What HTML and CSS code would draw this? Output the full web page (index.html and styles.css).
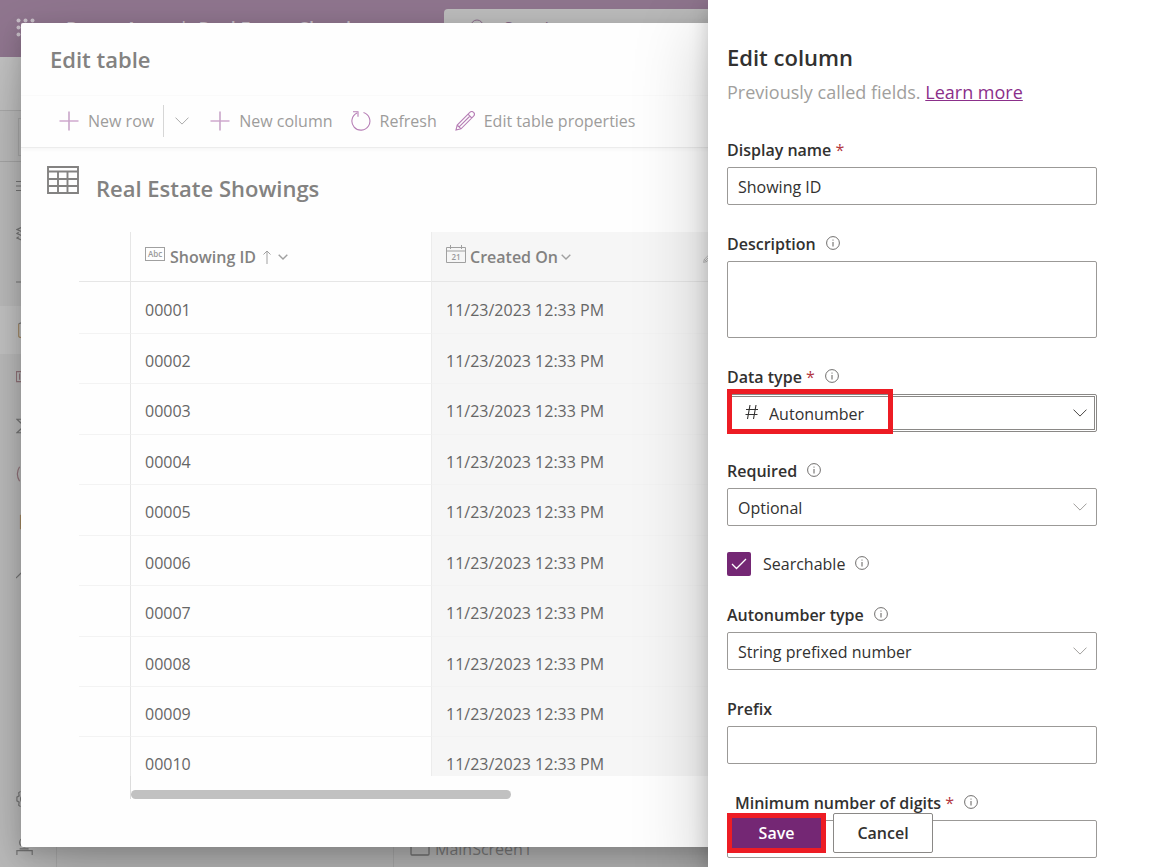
FILE: index.html
```html
<!DOCTYPE html>
<html lang="en">
<head>
<meta charset="utf-8">
<title>Edit table</title>
<link rel="stylesheet" href="styles.css">
</head>
<body>
<svg class="defs" aria-hidden="true">
  <symbol id="info" viewBox="0 0 14 14"><circle cx="7" cy="7" r="6.4" fill="none" stroke="currentColor" stroke-width=".9"/><path d="M7 6v4.5M7 3.6v1" stroke="currentColor" fill="none"/></symbol>
  <symbol id="chevron" viewBox="0 0 14 8"><path d="M.5 .6L7 7.1 13.5 .6" stroke="currentColor" fill="none"/></symbol>
  <symbol id="plus" viewBox="0 0 20 20"><path d="M.5 10h19" stroke="#b77fb6" stroke-width="1.2"/><path d="M10 .5v19" stroke="#c9a5c9" stroke-width="1.6"/></symbol>
  <symbol id="pencil" viewBox="0 0 20 20"><path d="M1 19l1.200-5L14.800 1.400a2.600 2.600 0 0 1 3.800 3.800L6 17.800zM2.200 14l3.800 3.800M13 3.200L16.800 7M4.100 15.900L15 5" fill="none" stroke="currentColor" stroke-width="1.100"/></symbol>
</svg>

<div class="app">
  <header class="app-header">
    <svg class="waffle" viewBox="0 0 20 20"><g fill="currentColor"><circle cx="2.500" cy="2.500" r="2"/><circle cx="9.500" cy="2.500" r="2"/><circle cx="16.500" cy="2.500" r="2"/><circle cx="2.500" cy="9.500" r="2"/><circle cx="9.500" cy="9.500" r="2"/><circle cx="16.500" cy="9.500" r="2"/><circle cx="2.500" cy="16.500" r="2"/><circle cx="9.500" cy="16.500" r="2"/><circle cx="16.500" cy="16.500" r="2"/></g></svg>
    <div class="app-name"><span>Power Apps</span><span>|</span><span>Real Estate Showings</span></div>
    <div class="app-search">
      <svg viewBox="0 0 18 18"><circle cx="7" cy="7" r="6" fill="none" stroke="#8a6b8b"/><path d="M11 11l6 6" stroke="#8a6b8b"/></svg>
      <span>Search</span>
    </div>
  </header>
  <div class="app-commands"></div>
  <div class="app-formula"><div class="formula-box"></div></div>
  <div class="app-body">
    <nav class="rail">
      <span><svg viewBox="0 0 20 20"><path d="M0 5h18M0 10h18M0 15h18"/></svg></span>
      <span><svg viewBox="0 0 20 20"><path d="M10 1L1 5l9 4 9-4zM3 8L1 9.500l9 4 9-4L17 8M3 13l-2 1.500 9 4 9-4L17 13"/></svg></span>
      <span><svg viewBox="0 0 20 20"><path d="M0 10h20M10 0v20"/></svg></span>
      <span class="active"><svg viewBox="0 0 20 20"><path class="amber" d="M3 3v14q0 1.500 4 1.500h6q4 0 4-1.500V3"/><path d="M3 3q7-3 14 0"/></svg></span>
      <span><svg viewBox="0 0 20 20"><path class="rose" d="M.5 3h18v11H.5zM4 5v7M7 5v7"/></svg></span>
      <span><svg viewBox="0 0 20 20"><path d="M17 5V2.500H1L9 10l-8 7.500h16V15"/></svg></span>
      <span><svg viewBox="0 0 20 20"><path class="rose" d="M4 2q-5 8 0 16M16 2q5 8 0 16"/></svg></span>
      <span><svg viewBox="0 0 20 20"><path class="amber" d="M5 2v16"/></svg></span>
      <span><svg viewBox="0 0 20 20"><path d="M0 19L17 2"/></svg></span>
      <span class="push"><svg viewBox="0 0 20 20"><path d="M5 1.500L3 3l.5 3.500L1 8v4l2.500 1.500L3 17l2 1.500"/><circle cx="10" cy="10" r="5"/></svg></span>
      <span class="agent"><svg viewBox="0 0 20 20"><circle cx="9" cy="5" r="5"/><path d="M4 12h10M1 19v-5h17v5"/></svg></span>
    </nav>
    <div class="tree"></div>
    <div class="canvas">
      <svg viewBox="0 0 20 16"><rect x="1" y="1" width="18" height="14" rx="1"/></svg>
      <span>MainScreen1</span>
    </div>
  </div>
</div>

<section class="dialog" aria-label="Edit table">
  <h1 class="dialog-title">Edit table</h1>
  <div class="toolbar">
    <button class="tool"><svg><use href="#plus"/></svg>New row</button>
    <button class="tool split" aria-label="More row options"><svg class="tool-chevron"><use href="#chevron"/></svg></button>
    <button class="tool"><svg><use href="#plus"/></svg>New column</button>
    <button class="tool"><svg viewBox="0 0 20 20"><path d="M12.500 1.500a9 9 0 1 1-6.500.5M2 .8h5v5" fill="none" stroke="currentColor" stroke-width="1.100"/></svg>Refresh</button>
    <button class="tool"><svg><use href="#pencil"/></svg>Edit table properties</button>
  </div>
  <div class="table-heading">
    <svg viewBox="0 0 32 28"><path d="M1 1h30v26H1zM1 5.500h30M1 13h30M1 20h30M11 5.500V27M20.500 5.500V27" fill="none" stroke="currentColor" stroke-width="1.900"/></svg>
    <h2>Real Estate Showings</h2>
  </div>
  <div class="grid">
    <table>
      <thead>
        <tr>
          <th class="gutter"></th>
          <th class="col-id"><div class="head">
            <svg class="abc" viewBox="0 0 20 14"><rect x=".5" y=".5" width="19" height="13" fill="none" stroke="currentColor"/><text x="10" y="10">Abc</text></svg>
            <span>Showing ID</span>
            <svg class="arrow" viewBox="0 0 8 14"><path d="M4 14V1M.5 4.500L4 1l3.500 3.500" fill="none" stroke="currentColor"/></svg>
            <svg class="head-chevron" viewBox="0 0 10 6"><path d="M.7 .7L5 5 9.300 .7" fill="none" stroke="currentColor" stroke-width="1.400"/></svg>
          </div></th>
          <th class="col-date"><div class="head">
            <svg class="cal" viewBox="0 0 20 18"><path d="M.5 2.500h19v15H.5zM.5 6h19M4.500 0v4M15.500 0v4" fill="none" stroke="currentColor"/><text x="10" y="14.500">21</text></svg>
            <span>Created On</span>
            <svg class="head-chevron" viewBox="0 0 10 6"><path d="M.7 .7L5 5 9.300 .7" fill="none" stroke="currentColor" stroke-width="1.400"/></svg>
            <svg class="head-edit"><use href="#pencil"/></svg>
          </div></th>
          <th class="col-rest"></th>
        </tr>
      </thead>
      <tbody>
        <tr><td></td><td>00001</td><td>11/23/2023 12:33 PM</td><td></td></tr>
        <tr><td></td><td>00002</td><td>11/23/2023 12:33 PM</td><td></td></tr>
        <tr><td></td><td>00003</td><td>11/23/2023 12:33 PM</td><td></td></tr>
        <tr><td></td><td>00004</td><td>11/23/2023 12:33 PM</td><td></td></tr>
        <tr><td></td><td>00005</td><td>11/23/2023 12:33 PM</td><td></td></tr>
        <tr><td></td><td>00006</td><td>11/23/2023 12:33 PM</td><td></td></tr>
        <tr><td></td><td>00007</td><td>11/23/2023 12:33 PM</td><td></td></tr>
        <tr><td></td><td>00008</td><td>11/23/2023 12:33 PM</td><td></td></tr>
        <tr><td></td><td>00009</td><td>11/23/2023 12:33 PM</td><td></td></tr>
        <tr><td></td><td>00010</td><td>11/23/2023 12:33 PM</td><td></td></tr>
      </tbody>
    </table>
  </div>
  <div class="scroll-track"><div class="scroll-thumb"></div></div>
</section>

<aside class="panel" aria-label="Edit column">
  <h2 class="panel-title">Edit column</h2>
  <p class="panel-sub">Previously called fields. <a href="#">Learn more</a></p>
  <form class="fields">
    <div class="field">
      <div class="label-row"><label for="name">Display name <span class="req">*</span></label></div>
      <input class="box" id="name" type="text" value="Showing ID">
    </div>
    <div class="field">
      <div class="label-row"><label for="desc">Description</label><svg class="info"><use href="#info"/></svg></div>
      <textarea class="box area" id="desc"></textarea>
    </div>
    <div class="field">
      <div class="label-row"><label for="type">Data type <span class="req">*</span></label><svg class="info"><use href="#info"/></svg></div>
      <div class="select-wrap focused">
        <select class="box" id="type"><option>Autonumber</option></select>
        <svg class="hash" viewBox="0 0 14 16"><path d="M5 1L2.500 15M11 1L8.500 15M1 5.500h12M.5 10.500h12" fill="none" stroke="currentColor" stroke-width="1.100"/></svg>
        <svg class="chev"><use href="#chevron"/></svg>
        <div class="highlight"></div>
      </div>
    </div>
    <div class="field">
      <div class="label-row"><label for="required">Required</label><svg class="info"><use href="#info"/></svg></div>
      <div class="select-wrap">
        <select class="box" id="required"><option>Optional</option></select>
        <svg class="chev"><use href="#chevron"/></svg>
      </div>
    </div>
    <div class="check-row">
      <span class="check">
        <input type="checkbox" id="searchable" checked>
        <svg viewBox="0 0 16 12"><path d="M1 6l4.500 4.500L15 1" fill="none" stroke="#fff" stroke-width="1.300"/></svg>
      </span>
      <label for="searchable">Searchable</label><svg class="info"><use href="#info"/></svg>
    </div>
    <div class="field">
      <div class="label-row"><label for="autotype">Autonumber type</label><svg class="info"><use href="#info"/></svg></div>
      <div class="select-wrap">
        <select class="box" id="autotype"><option>String prefixed number</option></select>
        <svg class="chev"><use href="#chevron"/></svg>
      </div>
    </div>
    <div class="field">
      <div class="label-row"><label for="prefix">Prefix</label></div>
      <input class="box" id="prefix" type="text">
    </div>
    <div class="field">
      <div class="label-row indent"><label for="digits">Minimum number of digits <span class="req">*</span></label><svg class="info"><use href="#info"/></svg></div>
      <input class="box" id="digits" type="text">
    </div>
  </form>
  <div class="actions">
    <button class="save">Save</button>
    <button class="cancel">Cancel</button>
  </div>
</aside>
</body>
</html>
```

FILE: styles.css
```css
* { box-sizing: border-box; }

body {
  margin: 0;
  height: 100vh;
  overflow: hidden;
  font-family: "Open Sans", "Noto Sans", sans-serif;
  font-size: 16px;
  line-height: 24px;
  color: #323130;
}

h1, h2, p { margin: 0; }
svg { display: block; flex: none; }
.defs { position: absolute; width: 0; height: 0; }
button, input, textarea, select { font: inherit; color: inherit; margin: 0; }

/* Dimmed application behind the dialog */
.app {
  display: flex;
  flex-direction: column;
  height: 100vh;
  background: #bebebe;
  color: #7e7e7e;
}
.app-header {
  display: flex;
  align-items: center;
  height: 57px;
  padding: 0 0 2px 16px;
  background: #90768f;
  color: #c9c0c9;
}
.waffle { width: 20px; height: 20px; }
.app-name { display: flex; gap: 10px; width: 378px; margin-left: 30px; font-size: 18px; font-weight: 600; white-space: nowrap; }
.app-search {
  display: flex;
  align-items: center;
  gap: 16px;
  flex: 1;
  height: 38px;
  padding-left: 26px;
  border-radius: 4px;
  background: #bebebe;
  color: #856886;
}
.app-search svg { width: 18px; height: 18px; }
.app-commands { height: 54px; background: #c3c3c3; border-bottom: 1px solid #acacac; }
.app-formula { height: 51px; padding: 7px 18px; border-bottom: 1px solid #a8a8a8; }
.formula-box { height: 38px; border: 1px solid #acacac; }
.app-body { display: flex; flex: 1; min-height: 0; }
.rail { display: flex; flex-direction: column; width: 57px; border-right: 1px solid #b0b0b0; }
.rail span { display: flex; align-items: center; height: 48px; padding-left: 16px; }
.rail .active { background: #c6c6c6; }
.rail .push { height: 56px; margin-top: auto; }
.rail .agent { height: 40px; }
.rail svg, .canvas svg { width: 18px; height: 20px; fill: none; stroke: #777; stroke-width: 1.3; }
.rail .amber { stroke: #a68b64; }
.rail .rose { stroke: #94757c; }
.tree { width: 337px; border-right: 1px solid #b0b0b0; }
.canvas { display: flex; align-items: flex-end; gap: 5px; flex: 1; padding: 0 0 6px 16px; }
.canvas svg { height: 26px; width: 20px; }

/* Edit table dialog */
.dialog {
  position: absolute;
  inset: 23px 21px 20px;
  display: flex;
  flex-direction: column;
  overflow: hidden;
  border-radius: 2px;
  background: #fefefe;
  color: #838281;
}
.app::after {
  content: "";
  position: absolute;
  inset: 23px 21px 20px;
  box-shadow: 0 30px 70px rgba(0, 0, 0, .22), 0 6px 18px rgba(0, 0, 0, .16);
}
.dialog-title { padding: 20px 29px; font-size: 22px; line-height: 32px; font-weight: 600; }
.toolbar {
  display: flex;
  align-items: center;
  height: 53px;
  padding: 0 0 2px 38px;
  border-top: 1px solid #fafafa;
  border-bottom: 1px solid #ececec;
  box-shadow: 0 2px 4px rgba(0, 0, 0, .03);
}
.tool {
  display: flex;
  align-items: center;
  gap: 9px;
  height: 32px;
  margin-right: 18px;
  padding: 0;
  border: 0;
  background: none;
  color: #9d9c9b;
  white-space: nowrap;
}
.tool svg { width: 20px; height: 20px; color: #b77fb6; }
.tool:first-child { margin-right: 9px; }
.split { margin-right: 21px; padding-left: 11px; border-left: 1px solid #d6d6d6; }
.tool .tool-chevron { width: 14px; height: 8px; color: #aaa; }
.table-heading { display: flex; align-items: center; gap: 17px; padding: 18px 26px 26px; }
.table-heading svg { width: 32px; height: 28px; margin-bottom: 12px; }
.table-heading h2 { padding-top: 4px; font-size: 22px; line-height: 36px; font-weight: 600; }

.grid { flex: 1; min-height: 0; margin-left: 58px; overflow: hidden; }
table { width: 100%; border-collapse: separate; border-spacing: 0; table-layout: fixed; }
th { height: 50px; padding: 0 0 0 14px; border-bottom: 1px solid #e6e6e6; text-align: left; font-weight: 600; }
td { height: 50px; padding: 4px 0 0 14px; border-bottom: 1px solid #f3f3f3; font-size: 16px; color: #666; }
tbody tr:first-child td { height: 52px; }
tbody tr:nth-child(4n+3) td, tbody tr:nth-child(5) td { height: 51px; }
th:first-child, td:first-child { width: 52px; border-right: 1px solid #e6e6e6; }
.col-id { width: 300px; }
.col-date { width: 300px; }
th:nth-child(3), td:nth-child(3) { background: #f6f6f6; border-left: 1px solid #ececec; }
.head { display: flex; align-items: center; }
.head svg { color: #a0a0a0; }
.head text { font-size: 8px; font-weight: 600; text-anchor: middle; fill: #999; }
.head span { margin: 0 7px 0 5px; }
.col-date .head span { margin: 0 3px 0 4px; }
.head .abc { width: 20px; height: 14px; margin-bottom: 6px; }
.head .cal { width: 20px; height: 18px; margin-bottom: 6px; }
.head .arrow { width: 8px; height: 14px; margin-right: 7px; }
.head .head-chevron { width: 10px; height: 6px; }
.head .head-edit { width: 12px; height: 12px; margin: 0 16px 0 auto; }
.scroll-track { width: 381px; height: 23px; margin: 0 0 48px 109px; padding-top: 14px; border-left: 1px solid #dcdcdc; }
.scroll-thumb { height: 9px; border-radius: 5px; background: #c1c1c1; }

/* Edit column panel */
.panel {
  position: absolute;
  inset: 0 0 0 auto;
  width: 448px;
  padding: 41px 59px 0 19px;
  background: #fff;
  box-shadow: 0 30px 70px rgba(0, 0, 0, .22), 0 6px 18px rgba(0, 0, 0, .18);
}
.panel-title { font-size: 22px; line-height: 32px; font-weight: 600; }
.panel-sub { padding: 6px 0 31px; font-size: 18px; line-height: 27px; color: #a19f9d; }
.panel-sub a { color: #8b2f8a; text-decoration: underline; }
.fields { display: flex; flex-direction: column; gap: 26px; }
.field { display: flex; flex-direction: column; gap: 5px; }
.label-row { display: flex; align-items: center; gap: 10px; height: 25px; padding-top: 1px; font-weight: 600; white-space: nowrap; }
.indent { padding-left: 8px; }
.req { color: #b3373f; font-weight: 400; }
.info { width: 14px; height: 14px; margin-bottom: 2px; color: #605e5c; }
.box {
  display: block;
  width: 100%;
  height: 38px;
  padding: 2px 10px 0;
  border: 1px solid #9b9997;
  border-radius: 2px;
  background: #fff;
  outline: 0;
  appearance: none;
}
.area { height: 77px; resize: none; }
.select-wrap { position: relative; }
.focused .box { padding-left: 39px; border: 3px double #8a8886; }
.chev { position: absolute; top: 15px; right: 10px; width: 14px; height: 8px; color: #a19f9d; pointer-events: none; }
.focused .chev { color: #484644; }
.hash { position: absolute; top: 10px; left: 18px; width: 14px; height: 16px; }
.highlight { position: absolute; top: -5px; left: 0; width: 166px; height: 45px; border: 5px solid #ed1c24; pointer-events: none; }
.check-row { display: flex; align-items: center; gap: 10px; height: 24px; }
.check { position: relative; width: 24px; height: 24px; margin-right: 2px; }
.check input { display: block; width: 24px; height: 24px; border-radius: 2px; background: #742774; appearance: none; }
.check svg { position: absolute; top: 6px; left: 4px; width: 16px; height: 12px; pointer-events: none; }
.actions { position: absolute; bottom: 14px; left: 19px; display: flex; gap: 7px; }
.actions button { height: 40px; padding: 0; font-weight: 600; }
.save { width: 99px; border: 5px solid #ed1c24; background: #742774; }
.actions .save { color: #fff; }
.cancel { width: 100px; border: 1px solid #8a8886; border-radius: 2px; background: #fff; }
```
